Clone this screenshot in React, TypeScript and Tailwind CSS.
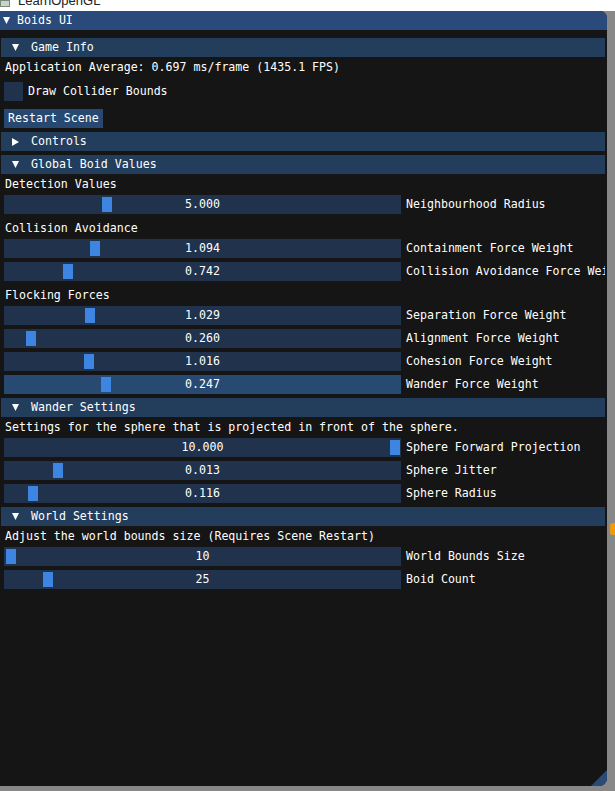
import React from "react";

const mono = { fontFamily: '"DejaVu Sans Mono", "Liberation Mono", monospace' };

function TriDown({ className }: { className?: string }) {
  return (
    <svg width="7" height="7" viewBox="0 0 7 7" className={className}>
      <polygon points="0,0 7,0 3.5,7" fill="#ffffff" />
    </svg>
  );
}

function TriRight({ className }: { className?: string }) {
  return (
    <svg width="7" height="8" viewBox="0 0 7 8" className={className}>
      <polygon points="0,0 7,4 0,8" fill="#ffffff" />
    </svg>
  );
}

function Header({ title, open = true, mt = "mt-[4px]" }: { title: string; open?: boolean; mt?: string }) {
  return (
    <div className={`${mt} ml-[1px] w-[604px] h-[19px] bg-[#233d5c] flex items-center`}>
      {open ? <TriDown className="ml-[11px]" /> : <TriRight className="ml-[11px]" />}
      <span className="ml-[12px] leading-[13px]">{title}</span>
    </div>
  );
}

function Line({ text, mt = "mt-[4px]" }: { text: string; mt?: string }) {
  return <div className={`${mt} h-[13px] leading-[13px] pl-[5px] whitespace-nowrap`}>{text}</div>;
}

type S = { value: string; label: string; grab: number; hover?: boolean };

function Slider({ value, label, grab, hover }: S) {
  return (
    <div className="mt-[4px] ml-[4px] h-[19px] flex items-center whitespace-nowrap">
      <div
        className={`relative w-[397px] h-[19px] shrink-0 flex items-center justify-center ${
          hover ? "bg-[#284a72]" : "bg-[#20324c]"
        }`}
      >
        <div className="absolute top-[2px] h-[15px] w-[10px] bg-[#3d85e0]" style={{ left: grab - 4 }} />
        <span className="relative leading-[13px]">{value}</span>
      </div>
      <span className="ml-[5px] leading-[13px]">{label}</span>
    </div>
  );
}

export default function App() {
  return (
    <div className="w-[615px] h-[791px] bg-[#888888] flex flex-col overflow-hidden text-white text-[11.6px]" style={mono}>
      {/* host window title strip, mostly hidden */}
      <div className="h-[11px] bg-white flex overflow-hidden shrink-0">
        <div className="w-[10px] h-[7px] bg-[#c9d3c9] border border-[#7a8a7a]" />
        <span
          className="ml-[8px] -mt-[7px] text-[13px] text-[#222] leading-[16px]"
          style={{ fontFamily: '"Liberation Sans", Arial, sans-serif' }}
        >
          LearnOpenGL
        </span>
      </div>

      <div className="flex flex-1">
        <div className="w-[608px] h-[775px] bg-[#151515] rounded-tr-[7px] rounded-br-[8px] flex flex-col overflow-hidden">
          {/* title bar */}
          <div className="h-[19px] bg-[#294a7a] flex items-center shrink-0">
            <TriDown className="ml-[3px]" />
            <span className="ml-[7px] leading-[13px]">Boids UI</span>
          </div>

          <div className="w-[605px] overflow-hidden flex flex-col flex-1">
            <Header title="Game Info" mt="mt-[8px]" />
            <Line text="Application Average: 0.697 ms/frame (1435.1 FPS)" />
            <div className="mt-[8px] ml-[4px] h-[19px] flex items-center">
              <div className="w-[19px] h-[19px] bg-[#20324c]" />
              <span className="ml-[5px] leading-[13px]">Draw Collider Bounds</span>
            </div>
            <div className="mt-[8px] ml-[4px] w-[99px] h-[19px] bg-[#274971] flex items-center pl-[4px]">
              <span className="leading-[13px]">Restart Scene</span>
            </div>

            <Header title="Controls" open={false} />
            <Header title="Global Boid Values" />
            <Line text="Detection Values" />
            <Slider value="5.000" label="Neighbourhood Radius" grab={102} />
            <Line text="Collision Avoidance" mt="mt-[8px]" />
            <Slider value="1.094" label="Containment Force Weight" grab={90} />
            <Slider value="0.742" label="Collision Avoidance Force Weight" grab={63} />
            <Line text="Flocking Forces" mt="mt-[8px]" />
            <Slider value="1.029" label="Separation Force Weight" grab={85} />
            <Slider value="0.260" label="Alignment Force Weight" grab={26} />
            <Slider value="1.016" label="Cohesion Force Weight" grab={84} />
            <Slider value="0.247" label="Wander Force Weight" grab={101} hover />

            <Header title="Wander Settings" />
            <Line text="Settings for the sphere that is projected in front of the sphere." />
            <Slider value="10.000" label="Sphere Forward Projection" grab={390} />
            <Slider value="0.013" label="Sphere Jitter" grab={53} />
            <Slider value="0.116" label="Sphere Radius" grab={28} />

            <Header title="World Settings" />
            <Line text="Adjust the world bounds size (Requires Scene Restart)" />
            <Slider value="10" label="World Bounds Size" grab={6} />
            <Slider value="25" label="Boid Count" grab={43} />

            <div className="flex-1" />
          </div>
          {/* resize grip */}
          <div className="flex justify-end -mt-[16px] shrink-0">
            <svg width="16" height="16" viewBox="0 0 16 16">
              <polygon points="16,0 16,16 0,16" fill="#2a4a78" />
            </svg>
          </div>
        </div>

        <div className="flex-1 flex flex-col">
          <div className="h-[512px]" />
          <div className="ml-[3px] w-[5px] h-[12px] bg-[#f29a0e] rounded-l-[3px]" />
        </div>
      </div>
    </div>
  );
}
